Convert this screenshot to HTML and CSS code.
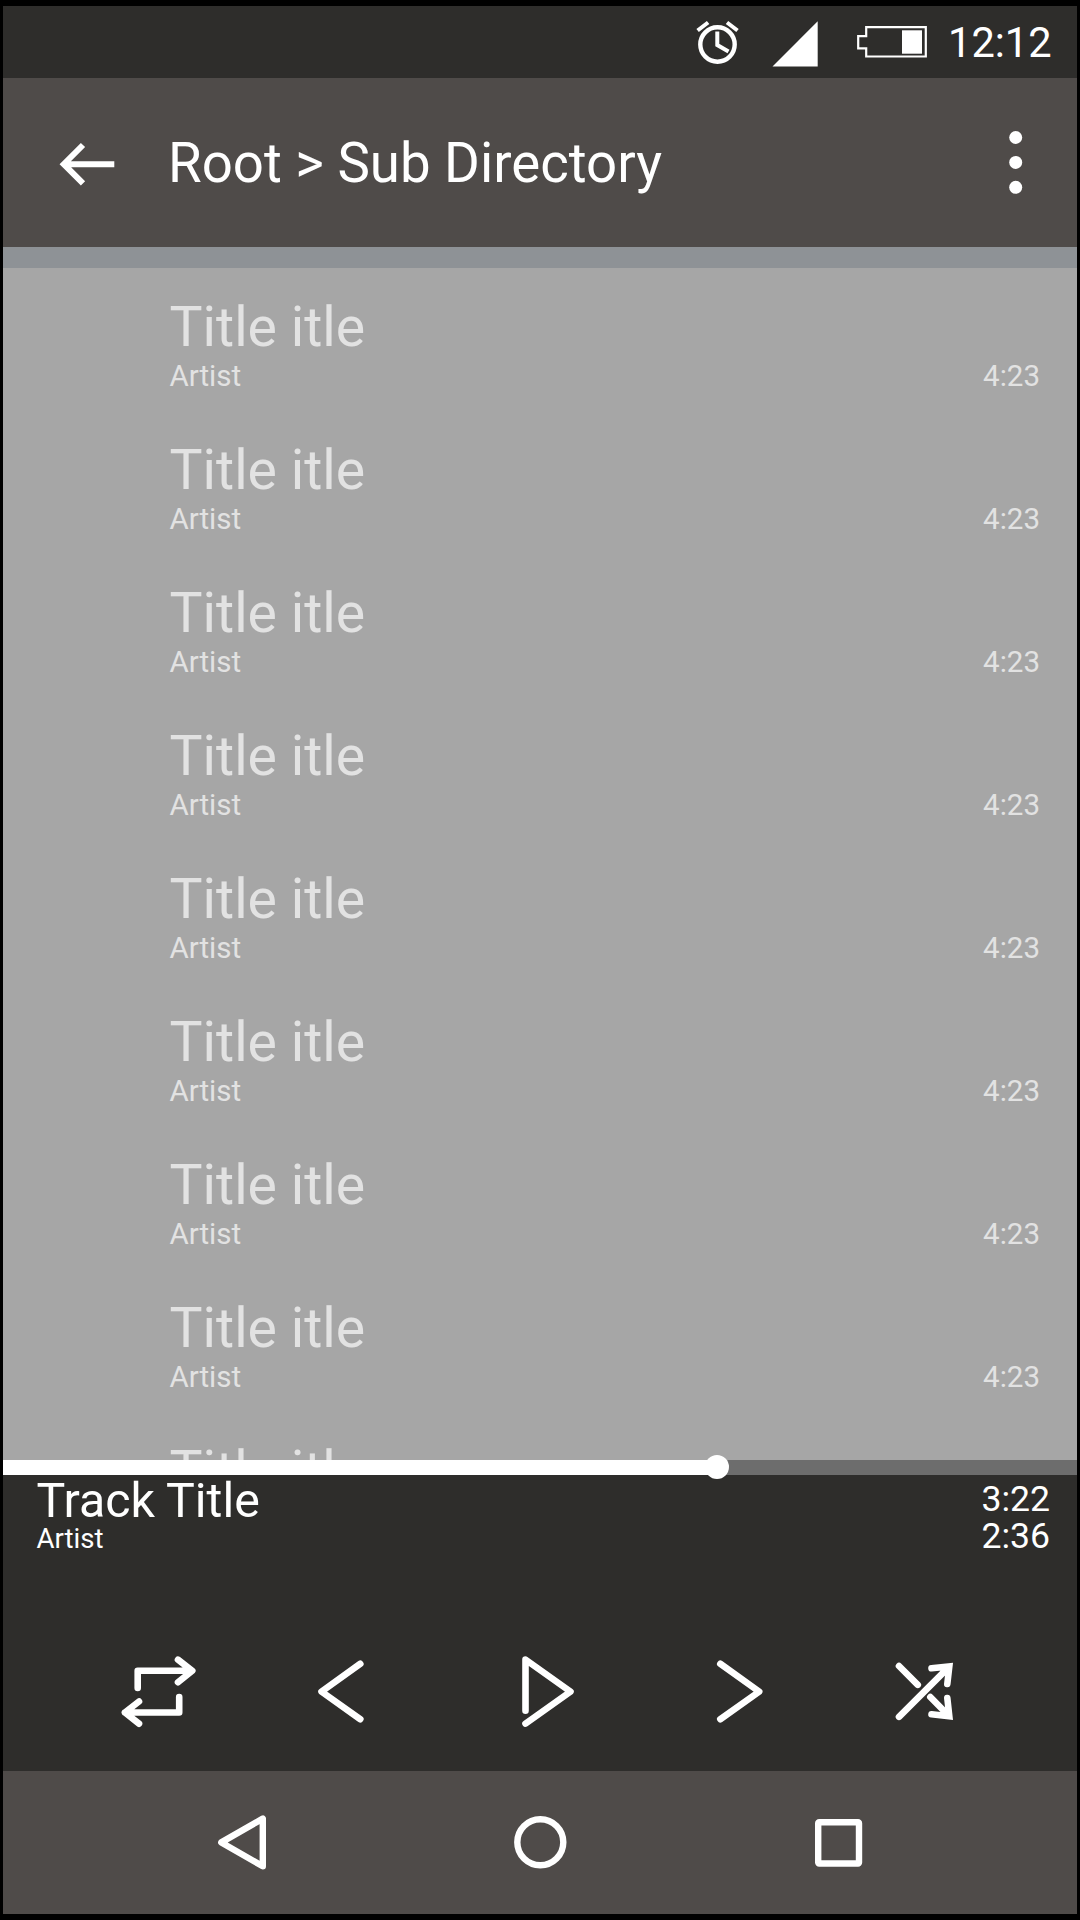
FILE: index.html
```html
<!DOCTYPE html>
<html lang="en">
<head>
<meta charset="utf-8">
<title>Music Player</title>
<link rel="stylesheet" href="styles.css">
</head>
<body>
<div class="phone">
  <header class="status">
    <svg class="alarm" viewBox="696 20 44 46"><g fill="none" stroke="#fff" stroke-width="4"><circle cx="717.5" cy="44.5" r="17.2" stroke-width="4.4"/><path d="M717.3 31.5V45L728.5 51.5M697.6 30.5L708.1 22.5M727 22.5L737.5 30.5"/></g></svg>
    <svg class="signal" viewBox="772 20 46 48"><path d="M772.5 66.5H817.7V21.3z" fill="#fff"/></svg>
    <svg class="battery" viewBox="856 24 72 36"><path d="M866.2 27.2H925.8V56.5H866.2V48.4H858.2V36.2H866.2z" fill="none" stroke="#fff" stroke-width="2.2"/><path d="M902 30.3H922V53.7H902z" fill="#fff"/></svg>
    <span class="clock">12:12</span>
  </header>
  <div class="toolbar">
    <svg class="back" viewBox="58 140 58 48"><path d="M114.3 164.2H64M83 145L63.8 164.2L83 183.4" fill="none" stroke="#fff" stroke-width="6"/></svg>
    <h1 class="path">Root &gt; Sub Directory</h1>
    <svg class="more" viewBox="1008 130 16 64"><g fill="#fff"><circle cx="1015.7" cy="137.5" r="6.5"/><circle cx="1015.7" cy="162.4" r="6.5"/><circle cx="1015.7" cy="187.3" r="6.5"/></g></svg>
  </div>
  <div class="strip"></div>
  <main class="list">
    <div class="row"><div class="title">Title itle</div><div class="meta"><span>Artist</span><span>4:23</span></div></div>
    <div class="row"><div class="title">Title itle</div><div class="meta"><span>Artist</span><span>4:23</span></div></div>
    <div class="row"><div class="title">Title itle</div><div class="meta"><span>Artist</span><span>4:23</span></div></div>
    <div class="row"><div class="title">Title itle</div><div class="meta"><span>Artist</span><span>4:23</span></div></div>
    <div class="row"><div class="title">Title itle</div><div class="meta"><span>Artist</span><span>4:23</span></div></div>
    <div class="row"><div class="title">Title itle</div><div class="meta"><span>Artist</span><span>4:23</span></div></div>
    <div class="row"><div class="title">Title itle</div><div class="meta"><span>Artist</span><span>4:23</span></div></div>
    <div class="row"><div class="title">Title itle</div><div class="meta"><span>Artist</span><span>4:23</span></div></div>
    <div class="row"><div class="title">Title itle</div></div>
  </main>
  <div class="seek"><div class="played" style="width:66.5%"><span class="knob"></span></div></div>
  <section class="player">
    <div class="now">
      <div><div class="track">Track Title</div><div class="artist">Artist</div></div>
      <div class="times"><div>3:22</div><div>2:36</div></div>
    </div>
    <div class="controls">
      <svg class="ctl" viewBox="118 1650 80 84"><path d="M137.7 1688V1670.8H191M178 1659.7L192.3 1670.8L178 1682.3M179.2 1697V1712.5H125M139 1701.5L124.9 1712.5L139 1723.7"/></svg>
      <svg class="ctl" viewBox="300 1650 80 84"><path d="M360.3 1663.8L321.5 1691.6L360.3 1719.2"/></svg>
      <svg class="ctl" viewBox="508 1650 80 84"><path d="M525.5 1710.8V1659.6L570.5 1691.6L525.5 1723.6"/></svg>
      <svg class="ctl" viewBox="700 1650 80 84"><path d="M720.3 1663.8L759.2 1691.6L720.3 1719.2"/></svg>
      <svg class="ctl miter" viewBox="884 1650 80 84"><path d="M899 1666L917.8 1684.8M899 1716.8L948 1667.8M931.5 1668.3L949.3 1666.5L947.3 1684M930.3 1697L948 1715M931.5 1714.3L949.3 1716.2L947.3 1698"/></svg>
    </div>
  </section>
  <nav class="nav">
    <svg class="ico" viewBox="210 1812 60 60"><path d="M262.8 1818.6V1866.3L221.3 1842.4z"/></svg>
    <svg class="ico" viewBox="510 1812 60 60"><circle cx="540.3" cy="1842.3" r="23"/></svg>
    <svg class="ico" viewBox="808 1812 60 60"><rect x="818.2" y="1822.3" width="40.8" height="41.2" rx="1"/></svg>
  </nav>
</div>
</body>
</html>
```
FILE: styles.css
```css
* { box-sizing: border-box; margin: 0; }
body { background: #000; font-family: Roboto, sans-serif; color: #fff; }
svg { display: block; flex: none; }
.phone { width: 1080px; height: 1920px; padding: 6px 3px; display: flex; flex-direction: column; overflow: hidden; }
.phone > * { flex: none; }
.status { height: 72px; background: #2e2d2b; display: flex; align-items: flex-start; padding: 14px 27px 0 693px; }
.alarm { width: 44px; height: 46px; }
.signal { width: 46px; height: 48px; margin-left: 32px; }
.battery { width: 72px; height: 36px; margin: 4px 0 0 38px; }
.clock { font-size: 41.6px; line-height: 48px; margin: -1px 0 0 20px; white-space: nowrap; }
.toolbar { height: 169px; background: #4f4b49; display: flex; align-items: flex-start; padding: 52px 53px 0 55px; }
.back { width: 58px; height: 48px; margin-top: 10px; }
.path { font-size: 54.6px; font-weight: 400; line-height: 64px; margin: 1px 0 0 52px; white-space: nowrap; }
.more { width: 16px; height: 64px; margin-left: auto; }
.strip { height: 21px; background: #8e9296; }
.list { height: 1192px; background: #a6a6a6; color: #e2e2e2; padding: 28px 37px 0 166.5px; overflow: hidden; }
.row { height: 143px; }
.title { font-size: 55.4px; line-height: 64px; }
.meta { font-size: 29.5px; line-height: 33px; display: flex; justify-content: space-between; }
.seek { height: 15px; background: #6d6d6d; }
.played { height: 15px; background: #fff; position: relative; }
.knob { position: absolute; right: -12px; top: -5px; width: 24px; height: 24px; border-radius: 50%; background: #fff; }
.player { height: 296px; background: #2e2d2b; }
.now { height: 175px; padding: 0 27px 0 33.5px; display: flex; justify-content: space-between; }
.track { font-size: 48.3px; line-height: 52px; }
.artist { font-size: 27.6px; line-height: 24px; }
.times { font-size: 35.6px; line-height: 37px; padding-top: 6px; text-align: right; }
.controls { display: grid; grid-template-columns: 182px 208px 192px 184px 80px; padding-left: 115px; }
.ctl { width: 80px; height: 84px; fill: none; stroke: #fff; stroke-width: 6.6; stroke-linecap: round; stroke-linejoin: round; }
.miter { stroke-linejoin: miter; }
.nav { height: 143px; background: #4f4b49; display: flex; gap: 238px; padding: 41px 0 0 207px; }
.ico { width: 60px; height: 60px; fill: none; stroke: #fff; stroke-width: 6.4; stroke-linejoin: round; }
.ico:nth-child(2) { margin-left: 2px; }
```
